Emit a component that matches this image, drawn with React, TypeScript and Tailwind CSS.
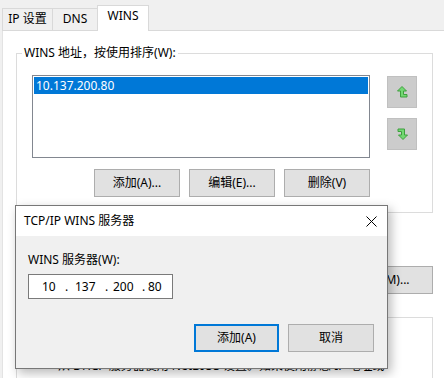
import React from "react";

const font = { fontFamily: '"Noto Sans", "Noto Sans CJK SC", sans-serif' };

function Btn({ label, w, primary }: { label: string; w: string; primary?: boolean }) {
  return (
    <div
      className={`${w} h-[28px] flex items-center justify-center bg-[#e1e1e1] text-[12px] text-black ${
        primary ? "border-2 border-[#0078d7]" : "border border-[#adadad]"
      }`}
    >
      {label}
    </div>
  );
}

function UpArrow({ down }: { down?: boolean }) {
  return (
    <svg width="11" height="12" viewBox="0 0 11 12" className={down ? "rotate-180" : ""}>
      <polygon
        points="5,0.5 9.5,5 6.5,5 6.5,8.5 10,8.5 10,11 3.5,11 3.5,5 0.5,5"
        fill="#72d872"
        stroke="#3e9f3e"
        strokeWidth="1"
        strokeLinejoin="miter"
      />
    </svg>
  );
}

function Tab({ label, active, w }: { label: string; active?: boolean; w: string }) {
  if (active) {
    return (
      <div
        className={`${w} h-[26px] -mb-px bg-white border border-b-0 border-[#d9d9d9] flex justify-center pt-[2px] text-[12px] leading-[16px] relative z-10`}
      >
        {label}
      </div>
    );
  }
  return (
    <div
      className={`${w} h-[22px] border border-b-0 border-[#d9d9d9] flex justify-center pt-[2px] text-[12px] leading-[16px]`}
    >
      {label}
    </div>
  );
}

export default function App() {
  return (
    <div
      className="relative w-[444px] h-[378px] overflow-hidden bg-[#f0f0f0] text-black pl-[2px]"
      style={font}
    >
      {/* tab strip */}
      <div className="flex items-end h-[31px] border-b border-[#d9d9d9]">
        <Tab label="IP 设置" w="w-[51px]" />
        <Tab label="DNS" w="w-[46px] -ml-px" />
        <Tab label="WINS" w="w-[52px] -ml-px" active />
      </div>

      {/* page */}
      <div className="bg-white h-[347px] border-l border-[#e3e3e3] pt-[22px]">
        <div className="ml-[13px] w-[417px] h-[160px] border border-[#dcdcdc]">
          <div className="-mt-[9px] pl-[5px] h-[16px] text-[12px] leading-[16px]">
            <span className="bg-white px-[2px]">WINS 地址，按使用排序(W):</span>
          </div>
          <div className="flex pl-[15px] mt-[14px]">
            <div className="w-[338px] h-[83px] border border-[#828790] p-px bg-white">
              <div className="h-[17px] bg-[#0078d7] text-white text-[12px] leading-[17px] pl-[2px]">
                10.137.200.80
              </div>
            </div>
            <div className="ml-[17px] pt-px flex flex-col gap-[10px]">
              <div className="w-[30px] h-[32px] bg-[#cccccc] border border-[#c0c0c0] flex items-center justify-center">
                <UpArrow />
              </div>
              <div className="w-[30px] h-[32px] bg-[#cccccc] border border-[#c0c0c0] flex items-center justify-center">
                <UpArrow down />
              </div>
            </div>
          </div>
          <div className="flex pl-[77px] gap-[9px] mt-[11px]">
            <Btn label="添加(A)..." w="w-[86px]" />
            <Btn label="编辑(E)..." w="w-[86px]" />
            <Btn label="删除(V)" w="w-[86px]" />
          </div>
        </div>

        <div className="ml-[13px] w-[417px] mt-[53px] flex items-center justify-between">
          <div className="flex items-center gap-[6px] text-[12px] pl-[4px]">
            <div className="w-[13px] h-[13px] border border-[#333] bg-white" />
            启用 LMHOSTS 查找(L)
          </div>
          <Btn label="导入 LMHOSTS(M)..." w="w-[157px]" />
        </div>

        <div className="ml-[13px] w-[417px] h-[80px] mt-[23px] border border-[#dcdcdc]">
          <div className="-mt-[9px] pl-[5px] h-[16px] text-[12px] leading-[16px]">
            <span className="bg-white px-[2px]">NetBIOS 设置</span>
          </div>
          <div className="pl-[12px] mt-[8px] flex items-center gap-[6px] text-[12px] leading-[16px]">
            <div className="w-[13px] h-[13px] rounded-full border border-[#333] bg-white" />
            默认(F):
          </div>
          <div className="pl-[41px] mt-[9px] text-[12px] leading-[16px] whitespace-nowrap">
            从 DHCP 服务器使用 NetBIOS 设置。如果使用静态 IP 地址或
          </div>
        </div>
      </div>

      {/* dialog */}
      <div className="absolute left-[15px] top-[205px] w-[373px] h-[164px] border border-[#777777] bg-[#f0f0f0] shadow-[3px_4px_10px_rgba(0,0,0,0.28)] z-20">
        <div className="h-[30px] bg-white flex items-center justify-between pl-[8px] pr-[10px] text-[12px]">
          <span>TCP/IP WINS 服务器</span>
          <svg width="11" height="11" viewBox="0 0 11 11">
            <path d="M0.5 0.5 L10.5 10.5 M10.5 0.5 L0.5 10.5" stroke="#000" strokeWidth="1" />
          </svg>
        </div>
        <div className="pl-[12px] pr-[13px]">
          <div className="mt-[16px] text-[12px] leading-[16px]">WINS 服务器(W):</div>
          <div className="mt-[6px] w-[145px] h-[25px] border border-[#7a7a7a] bg-white flex items-center pl-[13px] text-[12px]">
            <span className="w-[23px]">10</span>
            <span className="w-[10px]">.</span>
            <span className="w-[30px]">137</span>
            <span className="w-[8px]">.</span>
            <span className="w-[29px]">200</span>
            <span className="w-[6px]">.</span>
            <span>80</span>
          </div>
          <div className="mt-[25px] flex justify-end gap-[9px]">
            <Btn label="添加(A)" w="w-[85px]" primary />
            <Btn label="取消" w="w-[86px]" />
          </div>
        </div>
      </div>
    </div>
  );
}
